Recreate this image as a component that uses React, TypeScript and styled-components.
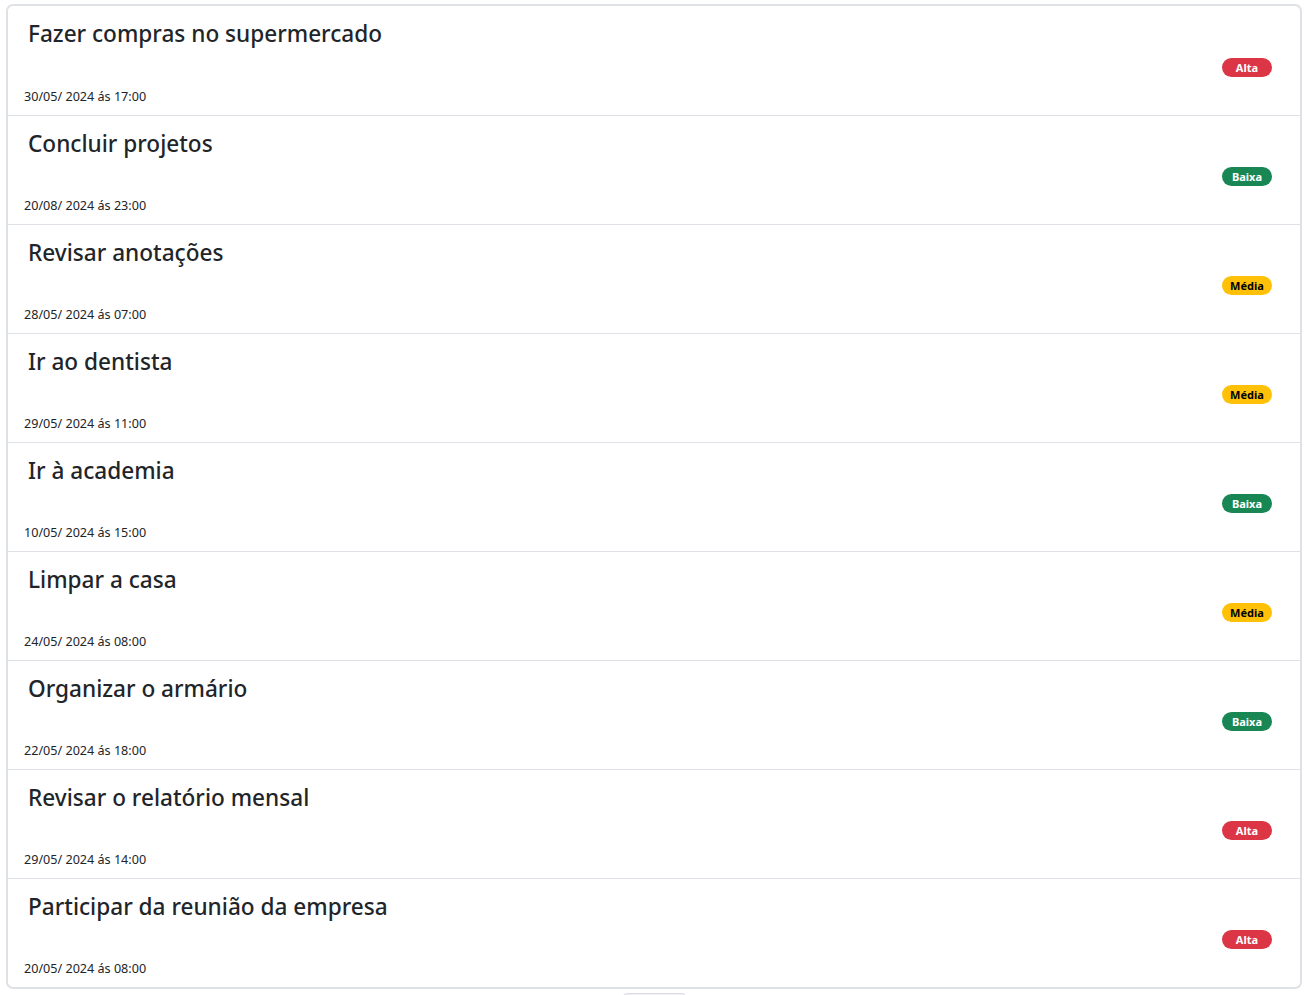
import styled, { createGlobalStyle } from 'styled-components';

type Prioridade = 'Alta' | 'Média' | 'Baixa';

interface Tarefa {
	titulo: string;
	data: string;
	prioridade: Prioridade;
}

const tarefas: Tarefa[] = [
	{ titulo: 'Fazer compras no supermercado', data: '30/05/ 2024 ás 17:00', prioridade: 'Alta' },
	{ titulo: 'Concluir projetos', data: '20/08/ 2024 ás 23:00', prioridade: 'Baixa' },
	{ titulo: 'Revisar anotações', data: '28/05/ 2024 ás 07:00', prioridade: 'Média' },
	{ titulo: 'Ir ao dentista', data: '29/05/ 2024 ás 11:00', prioridade: 'Média' },
	{ titulo: 'Ir à academia', data: '10/05/ 2024 ás 15:00', prioridade: 'Baixa' },
	{ titulo: 'Limpar a casa', data: '24/05/ 2024 ás 08:00', prioridade: 'Média' },
	{ titulo: 'Organizar o armário', data: '22/05/ 2024 ás 18:00', prioridade: 'Baixa' },
	{ titulo: 'Revisar o relatório mensal', data: '29/05/ 2024 ás 14:00', prioridade: 'Alta' },
	{ titulo: 'Participar da reunião da empresa', data: '20/05/ 2024 ás 08:00', prioridade: 'Alta' },
];

const cores: Record<Prioridade, { bg: string; fg: string }> = {
	Alta: { bg: '#dc3545', fg: '#fff' },
	Média: { bg: '#ffc107', fg: '#000' },
	Baixa: { bg: '#198754', fg: '#fff' },
};

const GlobalStyle = createGlobalStyle`
	body {
		margin: 0;
		background: #fff;
		color: #212529;
		font-family: 'Noto Sans', 'Open Sans', sans-serif;
	}
`;

const Page = styled.main`
	padding: 4px 4px 0 6px;
`;

const Lista = styled.ul`
	list-style: none;
	margin: 0;
	padding: 0;
	border: 2px solid #dee2e6;
	border-radius: 7px;
	overflow: hidden;
`;

const Item = styled.li`
	display: flex;
	justify-content: space-between;
	align-items: center;
	height: 109px;
	box-sizing: border-box;
	padding: 0 28px 0 16px;
	& + & {
		border-top: 1px solid #dee2e6;
	}
`;

const Info = styled.div`
	display: flex;
	flex-direction: column;
	justify-content: space-between;
	height: 100%;
	padding: 14px 0 9px;
	box-sizing: border-box;
`;

const Titulo = styled.h4`
	margin: 0 0 0 4px;
	font-size: 22.6px;
	font-weight: 500;
	line-height: 1.2;
`;

const Data = styled.small`
	font-size: 12.6px;
	line-height: 18px;
`;

const Badge = styled.span<{ $bg: string; $fg: string }>`
	display: inline-block;
	width: 50px;
	margin-top: 13px;
	padding: 3px 0;
	border-radius: 10px;
	background: ${p => p.$bg};
	color: ${p => p.$fg};
	font-size: 11px;
	font-weight: 700;
	line-height: 13px;
	text-align: center;
`;

const Rodape = styled.div`
	display: flex;
	justify-content: center;
	padding-top: 4px;
`;

const BotaoMais = styled.button`
	width: 63px;
	height: 30px;
	border: 1px solid #dcdce6;
	border-radius: 4px;
	background: #f0f0f4;
`;

const App = (): JSX.Element => (
	<Page>
		<GlobalStyle />
		<Lista>
			{tarefas.map(t => (
				<Item key={t.titulo}>
					<Info>
						<Titulo>{t.titulo}</Titulo>
						<Data>{t.data}</Data>
					</Info>
					<Badge $bg={cores[t.prioridade].bg} $fg={cores[t.prioridade].fg}>
						{t.prioridade}
					</Badge>
				</Item>
			))}
		</Lista>
		<Rodape>
			<BotaoMais aria-label="Mais" />
		</Rodape>
	</Page>
);

export default App;
